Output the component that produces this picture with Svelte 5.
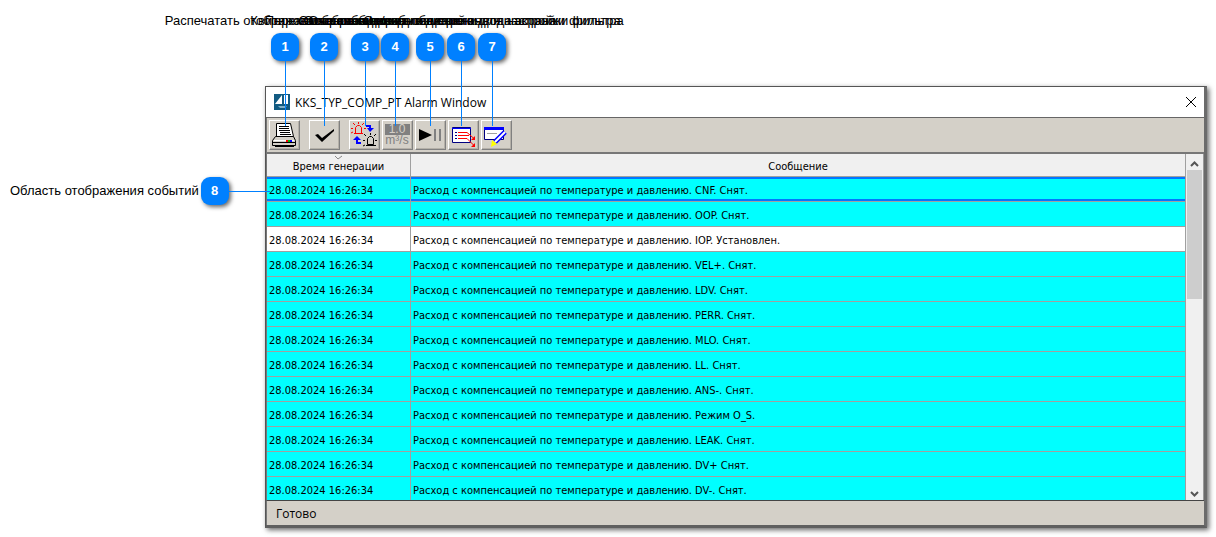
<script lang="ts">
  const callouts = [
    { n: 1, x: 285, text: 'Распечатать отображаемые сообщения' },
    { n: 2, x: 324, text: 'Квитировать сообщения' },
    { n: 3, x: 365, text: 'Переключение видов сообщений' },
    { n: 4, x: 395, text: 'Отображение ед. измерения' },
    { n: 5, x: 430, text: 'Остановка/возобновление вывода экрана' },
    { n: 6, x: 461, text: 'Отображение/скрытие строки для настройки фильтра' },
    { n: 7, x: 492, text: 'Открытие диалога для настройки фильтра' },
  ];

  const prefix = 'Расход с компенсацией по температуре и давлению. ';
  const time = '28.08.2024 16:26:34';
  const events = [
    'CNF. Снят.',
    'OOP. Снят.',
    'IOP. Установлен.',
    'VEL+. Снят.',
    'LDV. Снят.',
    'PERR. Снят.',
    'MLO. Снят.',
    'LL. Снят.',
    'ANS-. Снят.',
    'Режим O_S.',
    'LEAK. Снят.',
    'DV+ Снят.',
    'DV-. Снят.',
  ];

  let selected = $state(0);
</script>

<main>
  <section class="window">
    <header class="titlebar">
      <svg class="logo" width="16" height="16" viewBox="0 0 16 16" aria-hidden="true">
        <path fill="#125b82" d="M0 0h16v16H0z" />
        <path fill="#fff" d="M8 1v9H1zM10 1h4v9h-4z" />
        <path fill="#125b82" d="M11 4h1v3h-1z" />
        <path fill="#7fb0c8" d="M4 12h9l-2 2H6z" />
      </svg>
      <h1>KKS_TYP_COMP_PT Alarm Window</h1>
      <button class="close" aria-label="Закрыть">
        <svg width="12" height="12" viewBox="0 0 12 12"><path d="M1 1l10 10M11 1L1 11" stroke="#000" /></svg>
      </button>
    </header>

    <div class="toolbar">
      <button class="tool print" aria-label="Печать">
        <svg width="26" height="26" viewBox="0 0 26 26">
          <path fill="#fff" stroke="#000" d="M5.500 1.500h14l3 13h-17z" />
          <path stroke="#000" d="M8 4.500h10M8 6.500h10M8 8.500h11M9 10.500h10M9 12.500h11" />
          <path fill="#d4d0c8" stroke="#000" d="M4.500 14.500h18l2 4v5h-23v-5z" />
          <path stroke="#fff" d="M3 18.500h20" />
          <path stroke="#000" d="M2 20.500h22M4 24.500h19" />
          <path stroke="#f00" stroke-width="2" d="M15 19h2" />
          <path stroke="#0b0" stroke-width="2" d="M17 19h2" />
          <path stroke="#00f" stroke-width="2" d="M19 19h2" />
        </svg>
      </button>
      <button class="tool ack" aria-label="Квитировать">
        <svg width="26" height="26" viewBox="0 0 26 26">
          <path d="M4 13l3-1 4 4L23 7v2L11 20z" />
        </svg>
      </button>
      <button class="tool" aria-label="Переключить сигнализацию">
        <svg width="26" height="26" viewBox="0 0 26 26" fill="none">
          <g stroke="#f00">
            <path d="M4.500 11.500v-6l2-2h2l2 2v6zM3 11.500h9M7.500 0v2M2 1l2 2M13 1l-2 2M0 6.500h2M13 6.500h2M0 11l2-1" />
          </g>
          <g stroke="#000">
            <path d="M16.500 22.500v-6l2-2h2l2 2v6zM15 23.500h9M19.500 11v2M13 12l2 2M25 12l-2 2M12 18.500h2M24 18.500h2M12 24l2-1M25 24l-1-1" />
          </g>
          <path stroke="#00f" stroke-width="2" d="M15 4h4v3M10 21H6v-3" />
          <path fill="#00f" d="M16 6h7l-4 4zM2 18h8l-4-4z" />
        </svg>
      </button>
      <button class="tool units" aria-label="Единицы измерения">
        <span class="value">1.0</span>
        <span class="unit">m³/s</span>
      </button>
      <button class="tool" aria-label="Остановить обновление">
        <svg width="26" height="26" viewBox="0 0 26 26">
          <path d="M2 7l13 6-13 6z" />
          <path fill="#808080" d="M17 7h2v12h-2zM22 7h2v12h-2z" />
        </svg>
      </button>
      <button class="tool" aria-label="Строка фильтра">
        <svg width="26" height="26" viewBox="0 0 26 26" fill="none">
          <path fill="#fff" stroke="#000080" d="M2.500 5.500h18v15h-18z" />
          <path stroke="#00f" d="M2 6.500h19" />
          <path stroke="#f00" d="M8 10.500h9l7 6M8 13.500h11M8 16.500h9l7 7" />
          <path fill="#f00" d="M25 14v4h-4zM25 21v4h-4z" />
          <path stroke="#000080" d="M5 10.500h2M5 13.500h2M5 16.500h2" />
        </svg>
      </button>
      <button class="tool" aria-label="Настройка фильтра">
        <svg width="26" height="26" viewBox="0 0 26 26">
          <path fill="#fff" stroke="#000080" d="M1.500 6.500h19v11h-19z" />
          <path fill="#00f" d="M1 5h20v3H1z" />
          <path stroke="#a0a0a0" d="M4 11.500h10" />
          <path stroke="#00f" stroke-width="5" d="M12 20L22 10" />
          <path stroke="#fff" stroke-width="2" d="M12 20L22 10" />
          <path fill="#ff0" d="M9 18l5 4-6 3z" />
        </svg>
      </button>
    </div>

    <div class="list">
      <table>
        <thead>
          <tr>
            <th class="time">
              <svg class="sort" width="9" height="5" viewBox="0 0 9 5" aria-hidden="true">
                <path d="M1 1l3 3 4-3" fill="none" stroke="#888" />
              </svg>
              Время генерации
            </th>
            <th>Сообщение</th>
          </tr>
        </thead>
        <tbody>
          {#each events as event, i}
            <tr class:selected={i === selected} class:active={event.includes('Установлен')} onclick={() => (selected = i)}>
              <td>{time}</td>
              <td>{prefix}{event}</td>
            </tr>
          {/each}
        </tbody>
      </table>
      <div class="scrollbar">
        <button aria-label="Вверх">
          <svg width="9" height="6" viewBox="0 0 9 6"><path d="M1 5l3.500-3.500L8 5" /></svg>
        </button>
        <div class="thumb"></div>
        <button aria-label="Вниз">
          <svg width="9" height="6" viewBox="0 0 9 6"><path d="M1 1l3.500 3.500L8 1" /></svg>
        </button>
      </div>
    </div>

    <footer>Готово</footer>
  </section>

  {#each callouts as c}
    <div class="callout" style:left="{c.x}px">
      <span class="label">{c.text}</span>
      <span class="badge">{c.n}</span>
      <span class="line"></span>
    </div>
  {/each}

  <div class="side">
    <span class="label">Область отображения событий</span>
    <span class="badge">8</span>
    <span class="line"></span>
  </div>
</main>

<style>
  :global(body) {
    background: #fff;
  }

  main {
    position: relative;
    padding: 86px 9px 9px 265px;
    color: #000;
    font-family: "Liberation Sans", Arial, sans-serif;
    font-size: 13px;
  }

  .window {
    border: 1px solid #555;
    border-width: 1px 3px 3px 1px;
    border-color: #555 #6b6b6b #5f5f5f #555;
    box-shadow: 2px 2px 5px rgba(0, 0, 0, 0.6);
    background: #fff;
  }

  .titlebar {
    display: flex;
    align-items: center;
    height: 30px;
    padding: 0 7px 0 8px;
    border-bottom: 1px solid #666;
  }

  h1 {
    flex: 1;
    margin: 0 0 0 5px;
    font: 12px "Open Sans", "Segoe UI", sans-serif;
  }

  button {
    padding: 0;
    border: 0;
    background: none;
    color: inherit;
  }

  .close {
    display: flex;
  }

  .toolbar {
    display: flex;
    gap: 2px;
    padding: 2px;
    border-left: 1px solid #777;
    border-bottom: 2px solid #777;
    background: #d4d0c8;
  }

  .tool {
    display: flex;
    align-items: center;
    justify-content: center;
    box-sizing: border-box;
    width: 31px;
    height: 30px;
    padding: 0 1px 1px 0;
    border: 1px solid;
    border-color: #fff #808080 #808080 #fff;
    box-shadow: inset -1px -1px #b4b0a8;
  }

  .print,
  .ack {
    margin-right: 7px;
  }

  .units {
    flex-direction: column;
    color: #808080;
    font: 12px/11px "Liberation Sans", Arial, sans-serif;
  }

  .value {
    width: 25px;
    background: #808080;
    color: #d4d0c8;
  }

  .list {
    display: flex;
    border-left: 1px solid #777;
    border-bottom: 1px solid #444;
  }

  table {
    flex: 1;
    border-collapse: separate;
    border-spacing: 0;
    table-layout: fixed;
    font: 11px/14px "DejaVu Sans Condensed", Tahoma, sans-serif;
  }

  th {
    position: relative;
    height: 23px;
    padding: 4px 0 0;
    box-sizing: border-box;
    border-right: 1px solid #a0a0a0;
    border-bottom: 1px solid #a0a0a0;
    background: #f0f0f0;
    font-weight: 400;
  }

  .time {
    width: 144px;
  }

  .sort {
    position: absolute;
    top: 1px;
    left: 67px;
  }

  td {
    box-sizing: border-box;
    height: 25px;
    padding: 4px 2px 0;
    border-right: 1px solid #a0a0a0;
    border-bottom: 1px solid #a0a0a0;
    background: #0ff;
    white-space: nowrap;
  }

  .active td {
    background: #fff;
  }

  .selected td {
    box-shadow: inset 0 2px #0078ff, inset 0 -2px #0078ff;
  }

  tbody tr:last-child td {
    height: 23px;
    border-bottom: 0;
  }

  .scrollbar {
    display: flex;
    flex-direction: column;
    width: 15px;
    padding: 0 1px;
    border-right: 1px solid #999;
    background: #f0f0f0;
  }

  .scrollbar button {
    height: 16px;
  }

  .scrollbar path {
    fill: none;
    stroke: #555;
    stroke-width: 2;
  }

  .thumb {
    height: 129px;
    margin-bottom: auto;
    background: #cdcdcd;
  }

  footer {
    padding: 4px 9px 2px;
    border-left: 1px solid #777;
    background: #d4d0c8;
    font: 12px/18px "Open Sans", sans-serif;
  }

  /* numbered callouts lie over the window */
  .callout {
    position: absolute;
    top: 13px;
    display: flex;
    flex-direction: column;
    align-items: center;
    width: 0;
  }

  .label {
    line-height: 16px;
    white-space: nowrap;
  }

  .badge {
    flex: none;
    width: 28px;
    margin-top: 4px;
    border-radius: 9px;
    background: #0080ff;
    box-shadow: 2px 2px 4px rgba(0, 0, 0, 0.6);
    color: #fff;
    font: bold 13px/28px "Liberation Sans", Arial, sans-serif;
    text-align: center;
  }

  .line {
    width: 1px;
    height: 65px;
    background: #0080ff;
  }

  .callout .line {
    margin-left: 1px;
  }

  .side {
    position: absolute;
    top: 177px;
    left: 10px;
    display: flex;
    align-items: center;
    gap: 2px;
  }

  .side .badge {
    margin: 0;
  }

  .side .line {
    width: 41px;
    height: 1px;
    margin-left: -2px;
  }
</style>
